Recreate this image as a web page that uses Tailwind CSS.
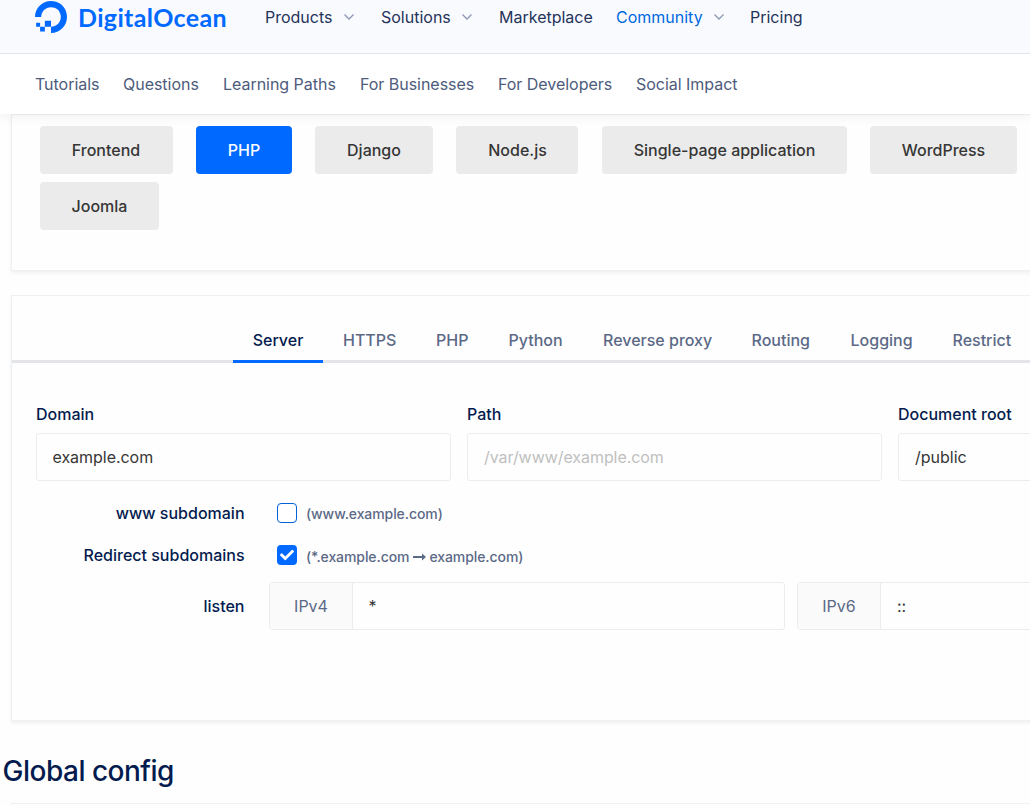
<!DOCTYPE html>
<html lang="en">
<head>
<meta charset="utf-8">
<title>NGINXConfig | DigitalOcean</title>
<script src="https://cdn.jsdelivr.net/npm/@tailwindcss/browser@4"></script>
</head>
<body class="h-[805px] w-[1030px] overflow-hidden bg-[#fefefe] font-['Inter',sans-serif] text-base leading-6 whitespace-nowrap text-[#363636]">
<header class="relative z-10 h-[114px] bg-white shadow-[0_1px_12px_rgba(0,0,0,0.07)]">
  <div class="flex h-[54px] items-start border-b border-[#e2e5ed] bg-[#f9fafe] pl-[35px] text-[#24335a]">
    <a class="mt-px flex w-[230px] items-center gap-[11px] text-[#0069ff]">
      <svg class="size-8 shrink-0" viewBox="0 0 24 24" fill="currentColor"><path d="M12.04 0C5.408-.02.005 5.37.005 11.992h4.638c0-4.923 4.882-8.731 10.064-6.855a6.95 6.95 0 014.147 4.148c1.889 5.177-1.924 10.055-6.84 10.064v-4.61H7.391v4.623h4.61V24c7.86 0 13.967-7.588 11.397-15.83-1.115-3.590-3.985-6.446-7.575-7.575A12.8 12.8 0 0012.039 0zM7.390 19.362H3.828v3.564H7.390zm-3.563 0v-2.978H.85v2.978z"/></svg>
      <span class="font-['Lato',sans-serif] text-[25px] leading-8 font-bold tracking-[0.35px]">DigitalOcean</span>
    </a>
    <nav class="flex pt-[5px]">
      <a class="flex w-[116px] items-center"><span class="w-[78px]">Products</span><svg class="h-2.5 w-3" viewBox="0 0 12 10" fill="none" stroke="#8c97b4" stroke-width="1.3"><path d="M1.5 2.5 6 7l4.500-4.500"/></svg></a>
      <a class="flex w-[118px] items-center"><span class="w-[80px]">Solutions</span><svg class="h-2.5 w-3" viewBox="0 0 12 10" fill="none" stroke="#8c97b4" stroke-width="1.3"><path d="M1.500 2.500 6 7l4.500-4.500"/></svg></a>
      <a class="w-[117px]">Marketplace</a>
      <a class="flex w-[134px] items-center"><span class="w-[97px] text-[#0069e0]">Community</span><svg class="h-2.5 w-3" viewBox="0 0 12 10" fill="none" stroke="#8c97b4" stroke-width="1.3"><path d="M1.500 2.500 6 7l4.500-4.500"/></svg></a>
      <a>Pricing</a>
    </nav>
  </div>
  <nav class="flex h-[60px] items-center pl-[35px] tracking-[-0.03px] text-[#4d5b7c]">
    <a class="w-[88px]">Tutorials</a><a class="w-[100px]">Questions</a><a class="w-[137px]">Learning Paths</a><a class="w-[138px]">For Businesses</a><a class="w-[138px]">For Developers</a><a>Social Impact</a>
  </nav>
</header>
<main class="h-[691px] w-[1030px] overflow-hidden">
  <section class="ml-[11px] h-[157px] w-[1100px] border border-[#eef1f2] pt-[11px] pl-7 shadow-[0_2px_4px_rgba(0,20,20,0.06)]">
    <div class="flex w-[985px] flex-wrap gap-x-[23px] gap-y-2 font-medium">
      <button class="h-12 w-[133px] rounded bg-[#ebebeb] pr-px">Frontend</button>
      <button class="h-12 w-24 rounded bg-[#0069ff] text-white">PHP</button>
      <button class="h-12 w-[118px] rounded bg-[#ebebeb]">Django</button>
      <button class="h-12 w-[122px] rounded bg-[#ebebeb] pl-px">Node.js</button>
      <button class="ml-px h-12 w-[245px] rounded bg-[#ebebeb]">Single-page application</button>
      <button class="h-12 w-[147px] rounded bg-[#ebebeb]">WordPress</button>
      <button class="h-12 w-[119px] rounded bg-[#ebebeb]">Joomla</button>
    </div>
  </section>
  <section class="mt-6 ml-[11px] h-[426px] w-[1100px] border border-[#eef1f2] pt-[22px] shadow-[0_2px_4px_rgba(0,20,20,0.06)]">
    <div class="h-[45px] border-b-[3px] border-[#e3e5e9] pl-[221px]">
      <div class="flex font-medium text-[#5b6987]">
        <a class="mr-5 h-[45px] w-[90px] border-b-[3px] border-[#0069ff] pt-[10px] text-center text-[#031b4e]">Server</a>
        <a class="w-[93px] pt-[10px]">HTTPS</a><a class="w-[72.5px] pt-[10px]">PHP</a><a class="w-[94.5px] pt-[10px]">Python</a><a class="w-[148.5px] pt-[10px]">Reverse proxy</a><a class="w-[99px] pt-[10px]">Routing</a><a class="w-[102px] pt-[10px]">Logging</a><a class="pt-[10px]">Restrict</a>
      </div>
    </div>
    <div class="flex gap-4 pt-[39px] pl-6">
      <label class="w-[415px] shrink-0 font-medium text-[#031b4e]">Domain
        <input class="mt-[7px] block h-12 w-full rounded-[3px] border border-[#ededf0] px-[15.5px] font-normal tracking-[-0.04px] text-[#363636]" value="example.com"></label>
      <label class="w-[415px] shrink-0 font-medium text-[#031b4e]">Path
        <input class="mt-[7px] block h-12 w-full rounded-[3px] border border-[#ededf0] px-4 font-normal tracking-[-0.06px] placeholder:text-[#c0c0c0]" placeholder="/var/www/example.com"></label>
      <label class="w-[415px] shrink-0 font-medium text-[#031b4e]">Document root
        <input class="mt-[7px] block h-12 w-full rounded-[3px] border border-[#ededf0] px-4 font-normal text-[#363636]" value="/public"></label>
    </div>
    <div class="mt-5 flex h-6 items-center">
      <span class="w-[233px] pr-[0.5px] text-right font-medium text-[#031b4e]">www subdomain</span>
      <span class="ml-8 size-5 rounded-[4px] border border-[#0062d6] bg-white"></span>
      <span class="mt-0.5 ml-[9px] text-sm font-medium tracking-[-0.08px] text-[#5b6987]">(www.example.com)</span>
    </div>
    <div class="mt-[18px] flex h-6 items-center">
      <span class="w-[233px] pr-[0.5px] text-right font-medium text-[#031b4e]">Redirect subdomains</span>
      <span class="ml-8 flex size-5 items-center justify-center rounded-[4px] bg-[#0069ff]"><svg class="size-3.5" viewBox="0 0 512 512" fill="#fff"><path d="M173.900 439.400l-166.400-166.400c-10-10-10-26.200 0-36.200l36.200-36.200c10-10 26.200-10 36.200 0L192 312.700 432.100 72.600c10-10 26.200-10 36.200 0l36.200 36.200c10 10 10 26.200 0 36.200L210.100 439.400c-10 10-26.200 10-36.200 0z"/></svg></span>
      <span class="mt-1 ml-[9px] flex items-center text-sm font-medium tracking-[-0.08px] text-[#5b6987]">(*.example.com<svg class="mr-[3px] ml-1 h-2 w-[13px]" viewBox="0 0 13 8" fill="currentColor"><path d="M0 3H9V.5L13 4 9 7.500V5H0z"/></svg>example.com)</span>
    </div>
    <div class="mt-[15px] flex h-12 items-center">
      <span class="w-[233px] shrink-0 pr-[0.5px] text-right font-medium text-[#031b4e]">listen</span>
      <div class="ml-6 flex h-12 w-[516px] shrink-0 rounded-[3px] border border-[#ededf0]"><span class="flex w-[83px] items-center justify-center border-r border-[#ededf0] bg-[#fafafa] text-[#5b6987]">IPv4</span><input class="min-w-0 flex-1 px-[15.5px]" value="*"></div>
      <div class="ml-3 flex h-12 w-[516px] shrink-0 rounded-[3px] border border-[#ededf0]"><span class="flex w-[83px] items-center justify-center border-r border-[#ededf0] bg-[#fafafa] text-[#5b6987]">IPv6</span><input class="min-w-0 flex-1 px-4" value="::"></div>
    </div>
  </section>
  <h2 class="mt-8 pl-[2.5px] text-[28px] leading-9 font-medium tracking-[-0.5px] text-[#031b4e]">Global config</h2>
  <section class="mt-[14px] ml-[11px] h-20 w-[1100px] border border-[#eef1f2]"></section>
</main>
</body>
</html>
